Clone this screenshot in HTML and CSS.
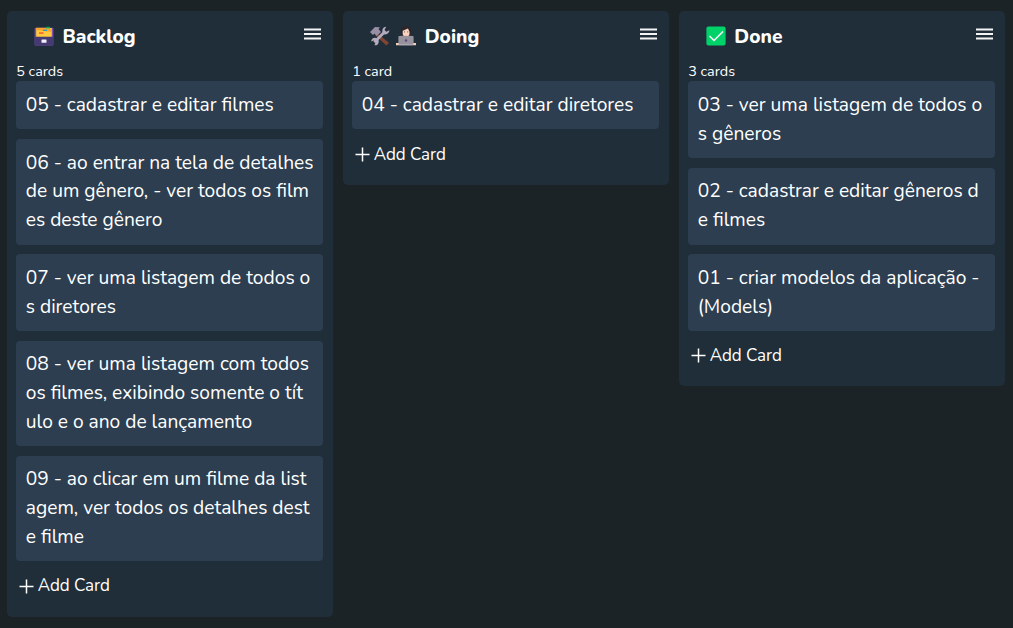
FILE: index.html
```html
<!DOCTYPE html>
<html lang="pt-BR">
<head>
<meta charset="utf-8">
<title>Kanban</title>
<link rel="stylesheet" href="styles.css">
</head>
<body>
<main class="board">
  <section class="column">
    <header class="head">
      <svg class="emoji" viewBox="0 0 20 20"><rect x=".6" y="1.8" width="18.8" height="17.7" rx="1" fill="#7d4fb0"/><rect x="2.2" y="2" width="15.6" height="9" fill="#ffc83d"/><path d="M2.2 4V1.8h10l1 1.2h4.6v3z" fill="#f9a52d"/><path d="M12 .8h4v1.8h-3.5z" fill="#00b050"/><path d="M9 3.6h4V5H9z" fill="#2d9bd5"/><path d="M5 6.4h4.5v1.3H5z" fill="#ee4b30"/><rect x=".6" y="10.7" width="18.8" height="8.8" rx="1" fill="#463a72"/><rect x="7.5" y="13.5" width="5" height="3.3" rx=".5" fill="#f4f0fa"/></svg>
      <h2 class="title">Backlog</h2>
      <svg class="menu" viewBox="0 0 17 12"><path d="M0 1.5h17M0 6h17M0 10.5h17"/></svg>
    </header>
    <p class="count">5 cards</p>
    <div class="cards">
      <article class="card">05 - cadastrar e editar filmes</article>
      <article class="card">06 - ao entrar na tela de detalhes<br>de um gênero, - ver todos os film<br>es deste gênero</article>
      <article class="card">07 - ver uma listagem de todos o<br>s diretores</article>
      <article class="card">08 - ver uma listagem com todos<br>os filmes, exibindo somente o tít<br>ulo e o ano de lançamento</article>
      <article class="card">09 - ao clicar em um filme da list<br>agem, ver todos os detalhes dest<br>e filme</article>
    </div>
    <div class="add"><svg class="plus" viewBox="0 0 15 15"><path d="M7.5 .5v14M.5 7.5h14"/></svg><span class="label">Add Card</span></div>
  </section>
  <section class="column">
    <header class="head">
      <svg class="emoji" viewBox="0 0 20 20"><path d="M7 7l12 9.7-2.6 2.8L5 9z" fill="#7d4533"/><path d="M0 6l5-5 5 .2-1.5 1.7L11 6 6.5 10 4.5 7.5 3 9z" fill="#998ea4"/><path d="M4.3 16.2L15.5 5" stroke="#b4acbc" stroke-width="2.8"/><path d="M16.2.8l-1.8 3.4 1.5 1.7 3.5-1.6a4 4 0 0 1-5.2 3.9A4 4 0 0 1 16.2.8zM1.2 15.6l2.6-1 1.8 1.7-1.1 3a3.8 3.8 0 1 0-2.9-5.6z" fill="#b4acbc"/></svg>
      <svg class="emoji second" viewBox="0 0 20 20"><path d="M5 10V4.8C5 1.5 7.3.1 10 .1s5 1.4 5 4.7V10z" fill="#2d2528"/><path d="M3 12c0-3 3-3.6 7-3.6s7 .6 7 3.6v4H3z" fill="#3b3b43"/><path d="M6.7 4.8L12 2.6l1.5 3.2v1.5a3.4 3.4 0 0 1-6.8 0z" fill="#f8d3bf"/><path d="M8.4 9.2h3.2L10 10.6z" fill="#e7b79f"/><path d="M8 5.9h1M11.2 5.9h1" stroke="#51383a" stroke-width=".8"/><rect x="2.4" y="10" width="15.2" height="9.3" rx=".8" fill="#98929c"/><circle cx="10" cy="14.5" r="1.2" fill="#5c4a80"/><path d="M0 17h2.8v2.3H0zm17.2 0H20v2.3h-2.8z" fill="#f5d0bc"/><path d="M2.8 18.8h14.4" stroke="#b8b2bd"/></svg>
      <h2 class="title">Doing</h2>
      <svg class="menu" viewBox="0 0 17 12"><path d="M0 1.5h17M0 6h17M0 10.5h17"/></svg>
    </header>
    <p class="count">1 card</p>
    <div class="cards"><article class="card">04 - cadastrar e editar diretores</article></div>
    <div class="add"><svg class="plus" viewBox="0 0 15 15"><path d="M7.5 .5v14M.5 7.5h14"/></svg><span class="label">Add Card</span></div>
  </section>
  <section class="column">
    <header class="head">
      <svg class="emoji" viewBox="0 0 20 20"><rect x=".4" y=".4" width="19.2" height="19.2" rx="2" fill="#00d26a"/><path d="M4 10.5l4 4L16.5 6" fill="none" stroke="#f4f4f4" stroke-width="1.7" stroke-linecap="round" stroke-linejoin="round"/></svg>
      <h2 class="title">Done</h2>
      <svg class="menu" viewBox="0 0 17 12"><path d="M0 1.5h17M0 6h17M0 10.5h17"/></svg>
    </header>
    <p class="count">3 cards</p>
    <div class="cards">
      <article class="card">03 - ver uma listagem de todos o<br>s gêneros</article>
      <article class="card">02 - cadastrar e editar gêneros d<br>e filmes</article>
      <article class="card">01 - criar modelos da aplicação -<br>(Models)</article>
    </div>
    <div class="add"><svg class="plus" viewBox="0 0 15 15"><path d="M7.5 .5v14M.5 7.5h14"/></svg><span class="label">Add Card</span></div>
  </section>
</main>
</body>
</html>
```
FILE: styles.css
```css
* { box-sizing: border-box; }
body {
  margin: 0;
  min-height: 100vh;
  background: #1c2326;
  color: #fff;
  font-family: Nunito, Lato, sans-serif;
}
.board {
  display: flex;
  align-items: flex-start;
  gap: 9.6px;
  padding: 11px 0 0 6.6px;
}
.column {
  flex: 0 0 326.4px;
  padding: 0 9.6px;
  background: #202e3a;
  border-radius: 5px;
}
.head {
  display: flex;
  align-items: center;
  height: 50.44px;
  padding-left: 17.4px;
}
.emoji { width: 20px; height: 20px; flex: none; }
.second { margin-left: 6.4px; }
.title {
  margin: 2px 0 0 8.8px;
  font-size: 19.2px;
  font-weight: 800;
  line-height: 28px;
}
.menu {
  width: 17px;
  height: 12px;
  margin: -4px 2px 0 auto;
  fill: none;
  stroke: #f4f4f4;
  stroke-width: 1.9;
}
.count {
  margin: 0;
  height: 20px;
  font-size: 14.4px;
  line-height: 20px;
}
.cards { display: flex; flex-direction: column; gap: 9.6px; }
.card {
  padding: 9.6px;
  background: #2c3e50;
  border-radius: 4px;
  font-size: 19.2px;
  line-height: 28.8px;
  white-space: nowrap;
}
.add {
  display: flex;
  align-items: center;
  gap: 3.5px;
  height: 55.3px;
  padding: 0 0 5.8px 3px;
  font-size: 17px;
  line-height: 24px;
  letter-spacing: -0.06px;
}
.label { padding-top: 0.8px; }
.plus { width: 15px; height: 15px; fill: none; stroke: #fff; stroke-width: 1.5; }
```
